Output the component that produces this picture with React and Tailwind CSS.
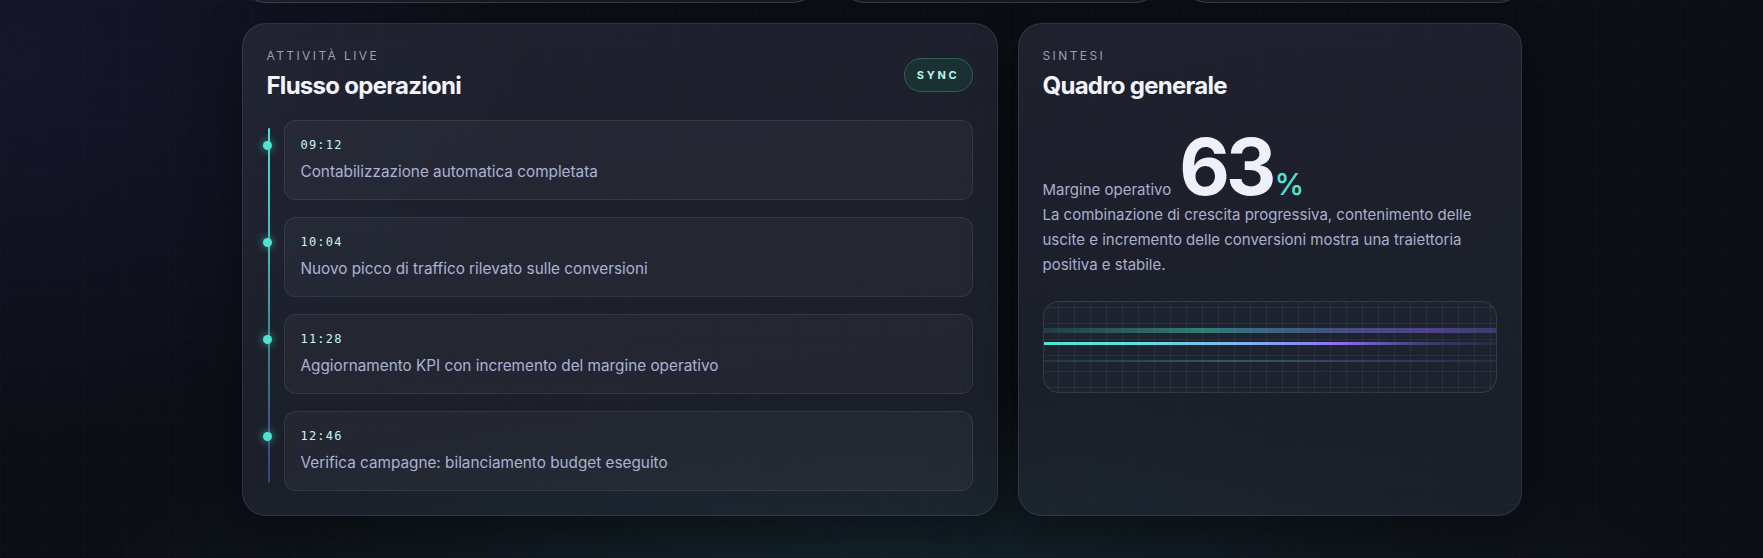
import React from 'react';

const events = [
  { time: '09:12', text: 'Contabilizzazione automatica completata' },
  { time: '10:04', text: 'Nuovo picco di traffico rilevato sulle conversioni' },
  { time: '11:28', text: 'Aggiornamento KPI con incremento del margine operativo' },
  { time: '12:46', text: 'Verifica campagne: bilanciamento budget eseguito' },
];

const cardClass =
  'rounded-3xl border border-white/[0.09] bg-[linear-gradient(170deg,rgba(44,46,62,0.62),rgba(38,46,58,0.52))] shadow-[0_20px_50px_rgba(0,0,0,0.35)]';

const Eyebrow = ({ children }) => (
  <p className="text-[12px] leading-4 uppercase tracking-[0.2em] text-[#9a9fb6]">{children}</p>
);

const Title = ({ children }) => (
  <h2 className="mt-1.5 text-[24px] leading-8 font-bold tracking-[-0.03em] text-[#f2f3fb]">{children}</h2>
);

const ActivityCard = () => (
  <section className={`${cardClass} p-6`}>
    <div className="flex items-center justify-between">
      <div>
        <Eyebrow>Attività live</Eyebrow>
        <Title>Flusso operazioni</Title>
      </div>
      <span className="rounded-full border border-[#2f5f5a] bg-[#1a3634]/80 px-3 py-2 text-[11px] leading-4 font-bold tracking-[0.25em] text-[#b4f5ea]">
        SYNC
      </span>
    </div>

    <div className="relative mt-[18px]">
      {/* timeline rail */}
      <div className="absolute left-[1px] top-2 bottom-2 w-[2px] rounded-full bg-[linear-gradient(180deg,#4fe0cf_0%,#3fb8b4_35%,#3a6f8e_70%,#3d3f80_100%)]" />
      <div className="flex flex-col gap-[17px] pl-[17px]">
        {events.map((e) => (
          <div
            key={e.time}
            className="relative rounded-xl border border-white/[0.08] bg-white/[0.035] p-4"
          >
            <span className="absolute -left-[21.5px] top-[19.5px] h-[9px] w-[9px] rounded-full bg-[#4fe3d2] shadow-[0_0_8px_rgba(79,227,210,0.7)]" />
            <p className="font-['DejaVu_Sans_Mono',monospace] text-[12px] leading-4 tracking-[0.1em] text-[#c4f7ef]">
              {e.time}
            </p>
            <p className="mt-2 text-[15.3px] leading-[22px] text-[#abb2d6]">{e.text}</p>
          </div>
        ))}
      </div>
    </div>
  </section>
);

const SummaryCard = () => (
  <section className={`${cardClass} p-6`}>
    <Eyebrow>Sintesi</Eyebrow>
    <Title>Quadro generale</Title>

    <div className="mt-[26px] flex items-baseline">
      <span className="text-[15px] leading-6 text-[#a9b0cf]">Margine operativo</span>
      <span className="ml-[8px] text-[78px] leading-none font-bold tracking-[-0.05em] text-[#eef0fb]">63</span>
      <span className="ml-[2px] text-[30px] leading-none font-medium text-[#4fe3d2]">%</span>
    </div>
    <p className="-mt-[4px] text-[15px] leading-[25px] text-[#a9b0cf]">
      La combinazione di crescita progressiva, contenimento delle uscite e incremento delle conversioni mostra
      una traiettoria positiva e stabile.
    </p>

    <div className="mt-6 h-[92px] overflow-hidden rounded-2xl border border-white/[0.1] bg-[#22303a]/30 bg-[linear-gradient(rgba(255,255,255,0.05)_1px,transparent_1px),linear-gradient(90deg,rgba(255,255,255,0.05)_1px,transparent_1px)] bg-[size:16px_16px] bg-[position:-2px_5px]">
      <div className="mt-[26px] h-[5px] bg-[linear-gradient(90deg,rgba(79,227,210,0.12)_0%,rgba(79,227,210,0.45)_35%,rgba(110,120,210,0.5)_65%,rgba(120,90,210,0.55)_85%,rgba(110,90,200,0.4)_100%)]" />
      <div className="mt-[9px] h-[3px] bg-[linear-gradient(90deg,#4fe3d2_0%,#5fe0dc_20%,#7fb2f0_45%,#8b6ff2_65%,rgba(120,100,220,0.35)_85%,rgba(120,100,220,0.1)_100%)]" />
      <div className="mt-[15px] h-[2px] bg-[linear-gradient(90deg,rgba(79,227,210,0.1)_0%,rgba(79,227,210,0.3)_40%,rgba(120,100,220,0.3)_75%,rgba(120,100,220,0.15)_100%)]" />
    </div>
  </section>
);

const App = () => {
  return (
    <div className="relative min-h-screen overflow-hidden bg-[#0c0e15] font-['Inter',sans-serif] bg-[radial-gradient(ellipse_45%_35%_at_50%_105%,rgba(34,78,84,0.38),transparent),radial-gradient(ellipse_30%_70%_at_0%_10%,rgba(52,46,110,0.25),transparent),linear-gradient(rgba(255,255,255,0.012)_1px,transparent_1px),linear-gradient(90deg,rgba(255,255,255,0.012)_1px,transparent_1px)] bg-[size:100%_100%,100%_100%,42px_42px,42px_42px]">
      <div className="mx-auto max-w-7xl pb-11">
        {/* previous row, scrolled off the top */}
        <div className="-mt-[117px] grid h-[120px] grid-cols-[575px_318px_1fr] gap-6">
          <div className="rounded-3xl border border-white/[0.16] bg-white/[0.04]" />
          <div className="rounded-3xl border border-white/[0.16] bg-white/[0.04]" />
          <div className="rounded-3xl border border-white/[0.16] bg-white/[0.04]" />
        </div>

        <div className="mt-5 grid grid-cols-[3fr_2fr] gap-5">
          <ActivityCard />
          <SummaryCard />
        </div>
      </div>
    </div>
  );
};

export default App;
